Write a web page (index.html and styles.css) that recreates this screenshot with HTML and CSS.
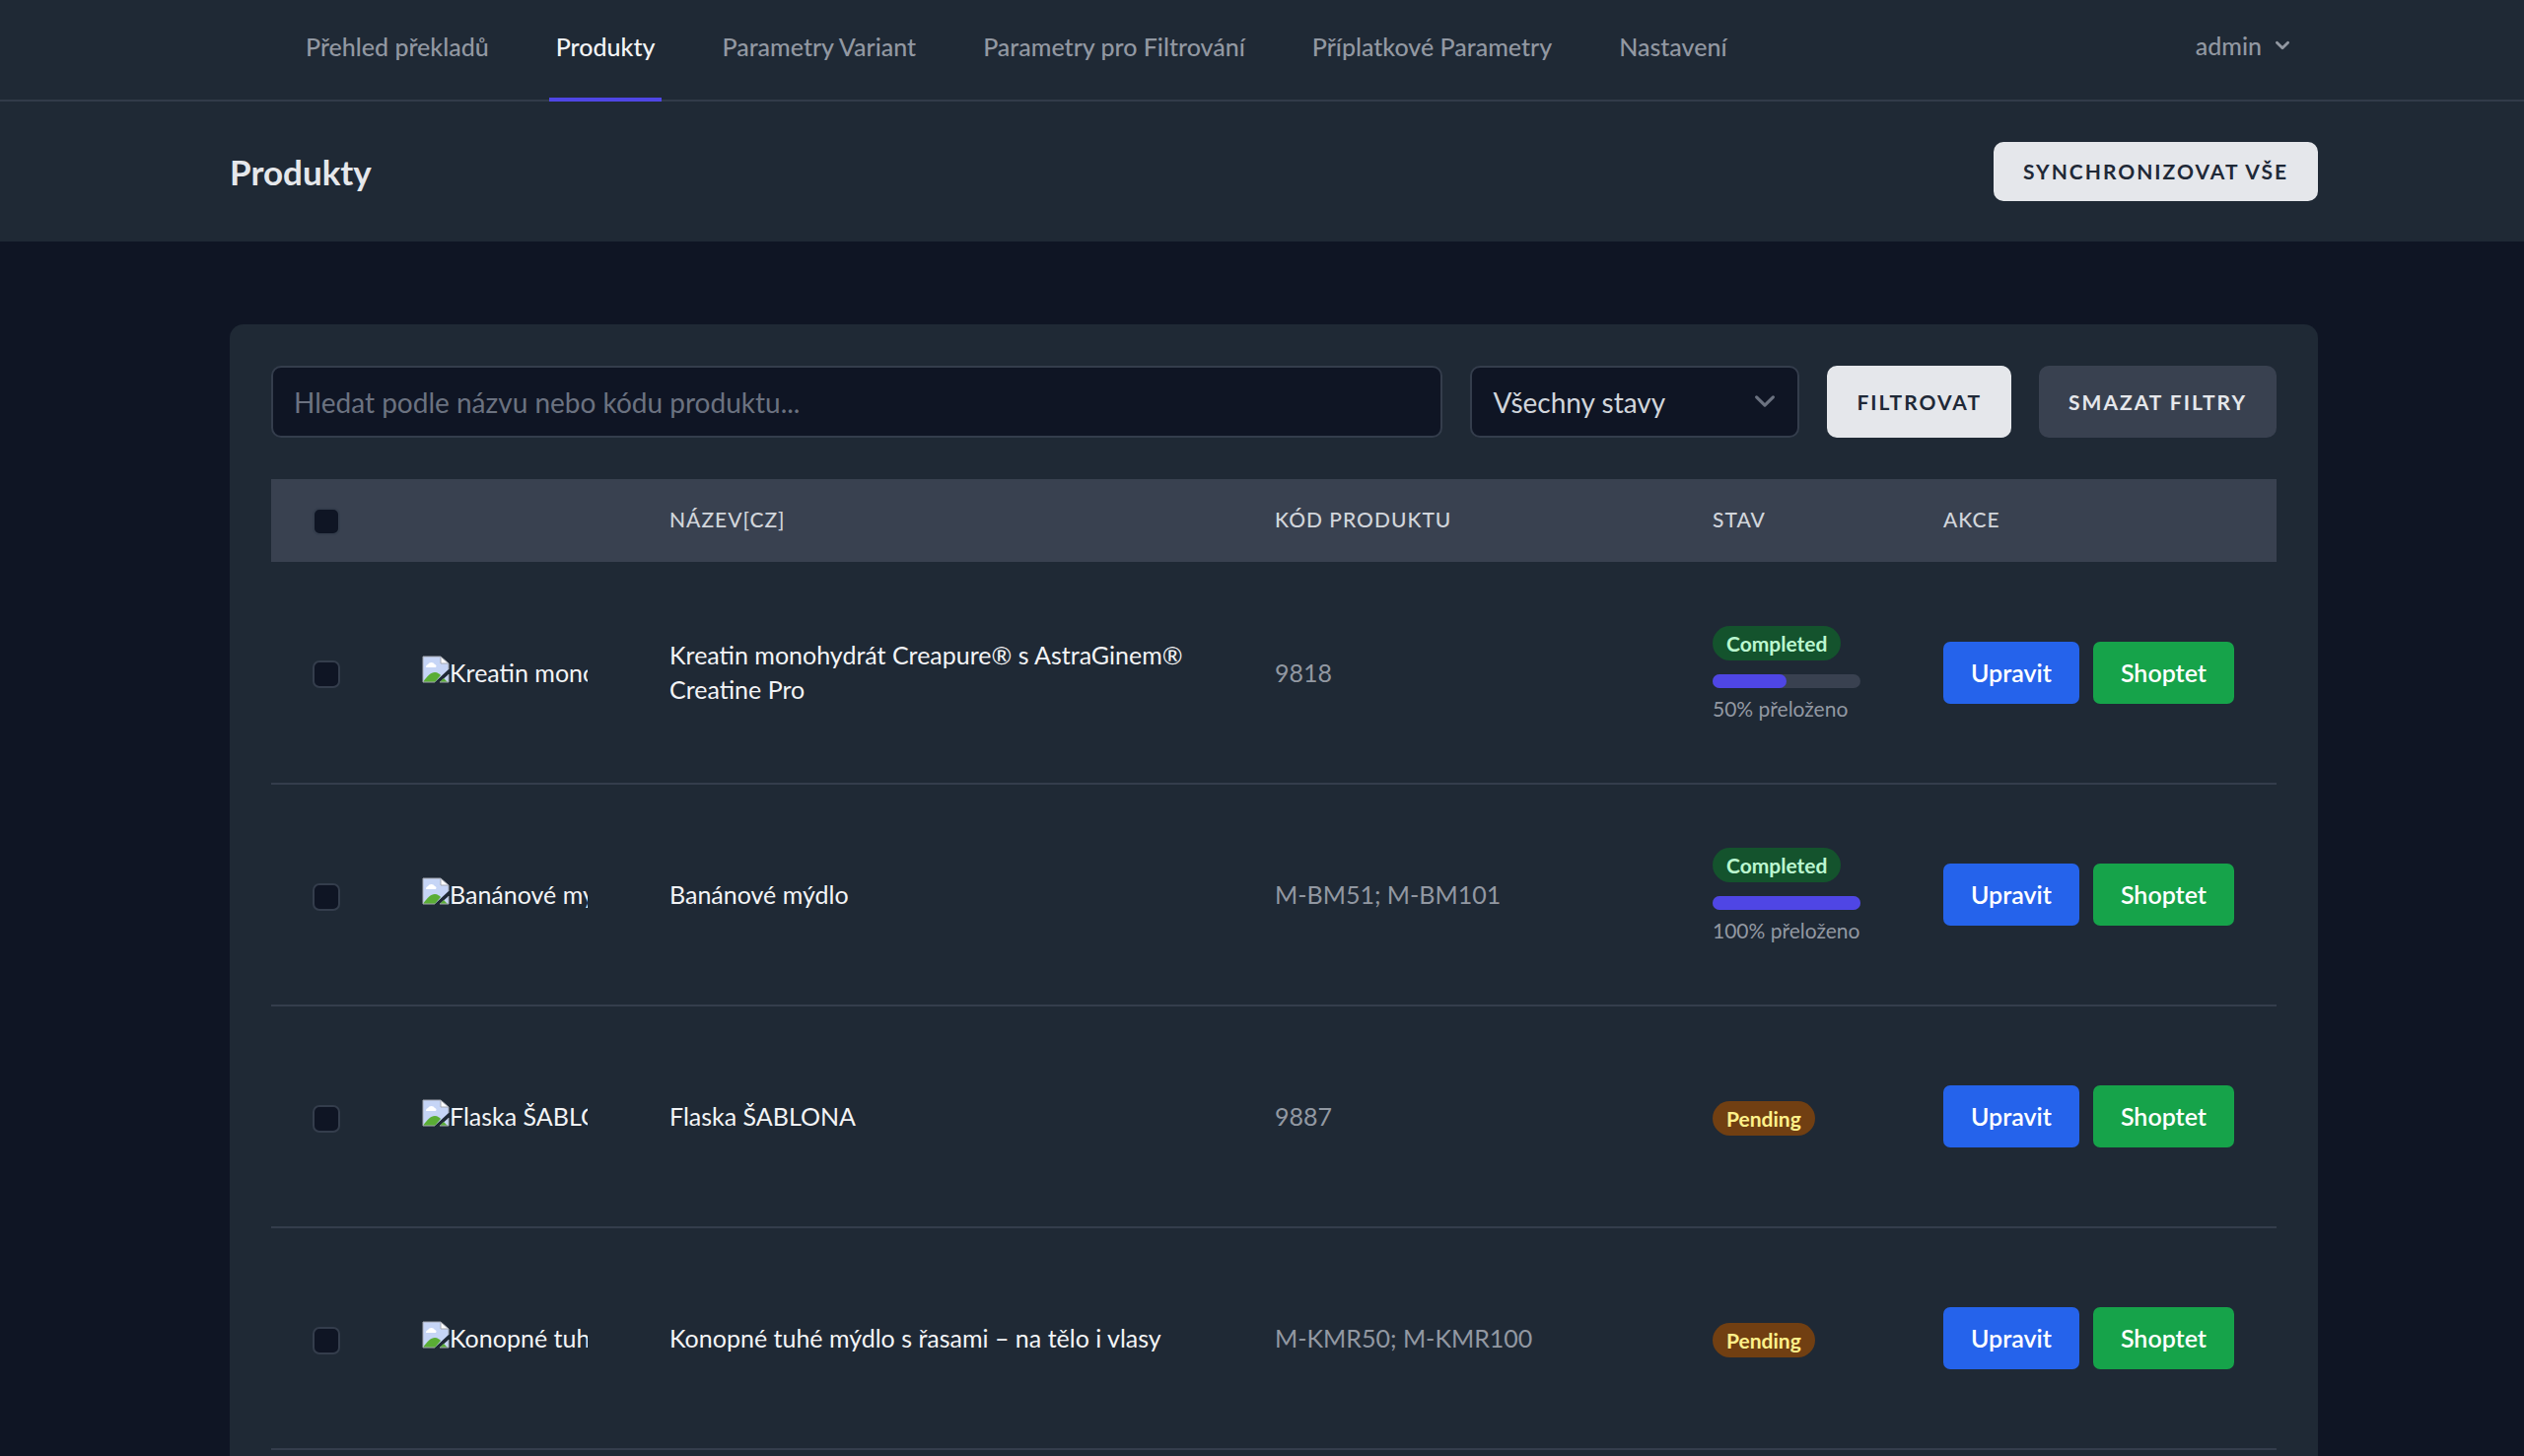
FILE: index.html
```html
<!DOCTYPE html>
<html lang="cs">
  <head>
    <meta charset="utf-8">
    <title>Produkty</title>
    <link rel="stylesheet" href="styles.css">
  </head>
  <body>
    <!-- broken thumbnail icon, used in every row -->
    <svg class="defs" aria-hidden="true">
      <symbol id="broken" viewBox="0 0 28 28">
        <path d="M1 1h18v7h8v6L13 27H1z" fill="#c6d5f6"/>
        <path d="M4 12a3 3 0 0 1 2-3a4 4 0 0 1 7 0a2 2 0 0 1 1 3z" fill="#fff"/>
        <path d="M1 27c4-6 8-10 12-10c3 0 5 2 6 3l-6 7z" fill="#5aad35"/>
        <path d="M18 27l9-8v8z" fill="#c6d5f6"/>
        <path d="M18 27l4-4l4 4z" fill="#5aad35"/>
        <path d="M19 1v7h8z" fill="#fff"/>
        <path d="M27 14V8l-8-7H1v26h12M19 1v7h8M18 27h9v-8" fill="none" stroke="#a3a7b0" stroke-width="1"/>
      </symbol>
    </svg>

    <nav class="nav">
      <div class="nav__links">
        <a class="nav__link" href="#">Přehled překladů</a>
        <a class="nav__link nav__link--active" href="#">Produkty</a>
        <a class="nav__link" href="#">Parametry Variant</a>
        <a class="nav__link" href="#">Parametry pro Filtrování</a>
        <a class="nav__link" href="#">Příplatkové Parametry</a>
        <a class="nav__link" href="#">Nastavení</a>
      </div>
      <button class="nav__user" type="button">
        admin
        <svg width="28" height="28" viewBox="0 0 20 20" fill="currentColor"><path fill-rule="evenodd" d="M5.293 7.293a1 1 0 011.414 0L10 10.586l3.293-3.293a1 1 0 111.414 1.414l-4 4a1 1 0 01-1.414 0l-4-4a1 1 0 010-1.414z"/></svg>
      </button>
    </nav>

    <header class="header">
      <h1 class="header__title">Produkty</h1>
      <button class="btn btn--light" type="button">Synchronizovat vše</button>
    </header>

    <main class="main">
      <div class="card">
        <form class="filters">
          <input class="field filters__search" type="text" aria-label="Hledat" placeholder="Hledat podle názvu nebo kódu produktu...">
          <div class="filters__state">
            <select class="field filters__select" aria-label="Stav">
              <option>Všechny stavy</option>
              <option>Completed</option>
              <option>Pending</option>
            </select>
            <svg class="filters__chevron" viewBox="0 0 20 20" fill="none"><path stroke="#6b7280" stroke-linecap="round" stroke-linejoin="round" stroke-width="1.5" d="M6 8l4 4 4-4"/></svg>
          </div>
          <button class="btn btn--light" type="button">Filtrovat</button>
          <button class="btn btn--dark" type="button">Smazat filtry</button>
        </form>

        <table class="products">
          <colgroup>
            <col class="col-check">
            <col class="col-image">
            <col>
            <col class="col-code">
            <col class="col-state">
            <col class="col-actions">
          </colgroup>
          <thead>
            <tr>
              <th><input class="check" type="checkbox" aria-label="Vybrat vše"></th>
              <th></th>
              <th>Název[CZ]</th>
              <th>Kód produktu</th>
              <th>Stav</th>
              <th>Akce</th>
            </tr>
          </thead>
          <tbody>
            <tr>
              <td><input class="check" type="checkbox" aria-label="Vybrat 9818"></td>
              <td><div class="thumb"><svg class="thumb__icon"><use href="#broken"/></svg><span>Kreatin monohydrát</span></div></td>
              <td>Kreatin monohydrát Creapure® s AstraGinem® Creatine Pro</td>
              <td class="code">9818</td>
              <td>
                <span class="badge badge--completed">Completed</span>
                <div class="progress"><div class="progress__bar" style="width: 50%"></div></div>
                <div class="progress-label">50% přeloženo</div>
              </td>
              <td><div class="actions"><a class="action action--edit" href="#">Upravit</a><a class="action action--shop" href="#">Shoptet</a></div></td>
            </tr>
            <tr>
              <td><input class="check" type="checkbox" aria-label="Vybrat M-BM51"></td>
              <td><div class="thumb"><svg class="thumb__icon"><use href="#broken"/></svg><span>Banánové mýdlo</span></div></td>
              <td>Banánové mýdlo</td>
              <td class="code">M-BM51; M-BM101</td>
              <td>
                <span class="badge badge--completed">Completed</span>
                <div class="progress"><div class="progress__bar" style="width: 100%"></div></div>
                <div class="progress-label">100% přeloženo</div>
              </td>
              <td><div class="actions"><a class="action action--edit" href="#">Upravit</a><a class="action action--shop" href="#">Shoptet</a></div></td>
            </tr>
            <tr>
              <td><input class="check" type="checkbox" aria-label="Vybrat 9887"></td>
              <td><div class="thumb"><svg class="thumb__icon"><use href="#broken"/></svg><span>Flaska ŠABLONA</span></div></td>
              <td>Flaska ŠABLONA</td>
              <td class="code">9887</td>
              <td><span class="badge badge--pending">Pending</span></td>
              <td><div class="actions"><a class="action action--edit" href="#">Upravit</a><a class="action action--shop" href="#">Shoptet</a></div></td>
            </tr>
            <tr>
              <td><input class="check" type="checkbox" aria-label="Vybrat M-KMR50"></td>
              <td><div class="thumb"><svg class="thumb__icon"><use href="#broken"/></svg><span>Konopné tuhé mýdlo</span></div></td>
              <td>Konopné tuhé mýdlo s řasami – na tělo i vlasy</td>
              <td class="code">M-KMR50; M-KMR100</td>
              <td><span class="badge badge--pending">Pending</span></td>
              <td><div class="actions"><a class="action action--edit" href="#">Upravit</a><a class="action action--shop" href="#">Shoptet</a></div></td>
            </tr>
          </tbody>
        </table>
      </div>
    </main>
  </body>
</html>
```
FILE: styles.css
```css
* {
  box-sizing: border-box;
}
html {
  overflow: hidden;
}
body {
  margin: 0;
  background: #0f1524;
  color: #f3f4f6;
  font-family: Lato, "Open Sans", sans-serif;
  font-size: 25px;
  line-height: 35px;
}
input, select, button {
  font-family: inherit;
}
.defs {
  display: none;
}

/* top bar */
.nav {
  display: flex;
  justify-content: space-between;
  height: 103px;
  padding: 0 231px 0 303px;
  background: #1f2935;
  border-bottom: 2px solid #323b49;
}
.nav__links {
  display: flex;
  gap: 54px;
  margin-bottom: -2px;
}
.nav__link {
  display: flex;
  align-items: center;
  padding: 0 7px 4px;
  border-bottom: 4px solid transparent;
  color: #9298a2;
  font-weight: 500;
  text-decoration: none;
  white-space: nowrap;
}
.nav__link--active {
  border-color: #4f46e5;
  color: #f3f4f6;
}
.nav__user {
  display: flex;
  align-items: center;
  gap: 7px;
  padding: 0 0 10px;
  border: 0;
  background: none;
  color: #9298a2;
  font-size: 25px;
  font-weight: 500;
}

/* page header */
.header {
  display: flex;
  align-items: center;
  justify-content: space-between;
  padding: 41px 209px 41px 233px;
  background: #1f2935;
}
.header__title {
  margin: 0;
  color: #e5e7eb;
  font-size: 35px;
  font-weight: 700;
}
.btn {
  padding: 14px 28px;
  border: 2px solid transparent;
  border-radius: 10px;
  font-size: 21px;
  font-weight: 700;
  line-height: 28px;
  letter-spacing: 2px;
  text-transform: uppercase;
  white-space: nowrap;
}
.btn--light {
  background: #e5e7eb;
  color: #1f2937;
}
.btn--dark {
  background: #394150;
  color: #e5e7eb;
}

/* card with filters */
.main {
  padding: 84px 209px 84px 233px;
}
.card {
  padding: 42px;
  border-radius: 14px;
  background: #1f2935;
}
.filters {
  display: flex;
  gap: 28px;
  margin-bottom: 42px;
}
.field {
  height: 73px;
  padding: 0 21px;
  border: 2px solid #343d4c;
  border-radius: 10px;
  background: #0f1524;
  color: #d1d5db;
  font-size: 28px;
}
.field::placeholder {
  color: #6b7280;
  opacity: 1;
}
.filters__search {
  flex: 1;
  min-width: 0;
}
.filters__state {
  position: relative;
  width: 334px;
}
.filters__select {
  width: 100%;
  appearance: none;
}
.filters__chevron {
  position: absolute;
  top: 15px;
  right: 14px;
  width: 42px;
  height: 42px;
  pointer-events: none;
}

/* products */
.products {
  width: 100%;
  table-layout: fixed;
  border-collapse: collapse;
}
.col-check {
  width: 111px;
}
.col-image {
  width: 251px;
}
.col-code {
  width: 444px;
}
.col-state {
  width: 234px;
}
.col-actions {
  width: 380px;
}
.products th {
  height: 84px;
  padding: 0 42px 2px;
  background: #394150;
  color: #d1d5db;
  font-size: 21px;
  font-weight: 500;
  line-height: 28px;
  letter-spacing: 1px;
  text-align: left;
  text-transform: uppercase;
}
.products td {
  height: 225px;
  padding: 0 42px;
  border-bottom: 2px solid #343d4c;
}
.code {
  color: #9298a2;
}
.check {
  display: block;
  width: 28px;
  height: 28px;
  margin: 4px 0 0;
  appearance: none;
  border: 2px solid #343d4c;
  border-radius: 7px;
  background: #0f1524;
}
.thumb {
  display: flex;
  width: 168px;
  overflow: hidden;
  white-space: nowrap;
}
.thumb__icon {
  flex: none;
  width: 28px;
  height: 28px;
}
.badge {
  display: inline-block;
  padding: 3px 14px;
  border-radius: 18px;
  font-size: 21px;
  font-weight: 700;
  line-height: 29px;
  vertical-align: middle;
}
.badge--completed {
  background: #14532d;
  color: #bbf7d0;
}
.badge--pending {
  background: #713f12;
  color: #fef08a;
}
.progress {
  height: 14px;
  margin-top: 14px;
  border-radius: 7px;
  background: #394150;
}
.progress__bar {
  height: 14px;
  border-radius: 7px;
  background: #4f46e5;
}
.progress-label {
  margin-top: 7px;
  color: #9298a2;
  font-size: 21px;
  line-height: 28px;
  white-space: nowrap;
}
.actions {
  display: flex;
  gap: 14px;
}
.action {
  padding: 14px 28px;
  border-radius: 7px;
  color: #fff;
  font-weight: 600;
  text-decoration: none;
}
.action--edit {
  background: #2563eb;
}
.action--shop {
  background: #16a34a;
}
```
